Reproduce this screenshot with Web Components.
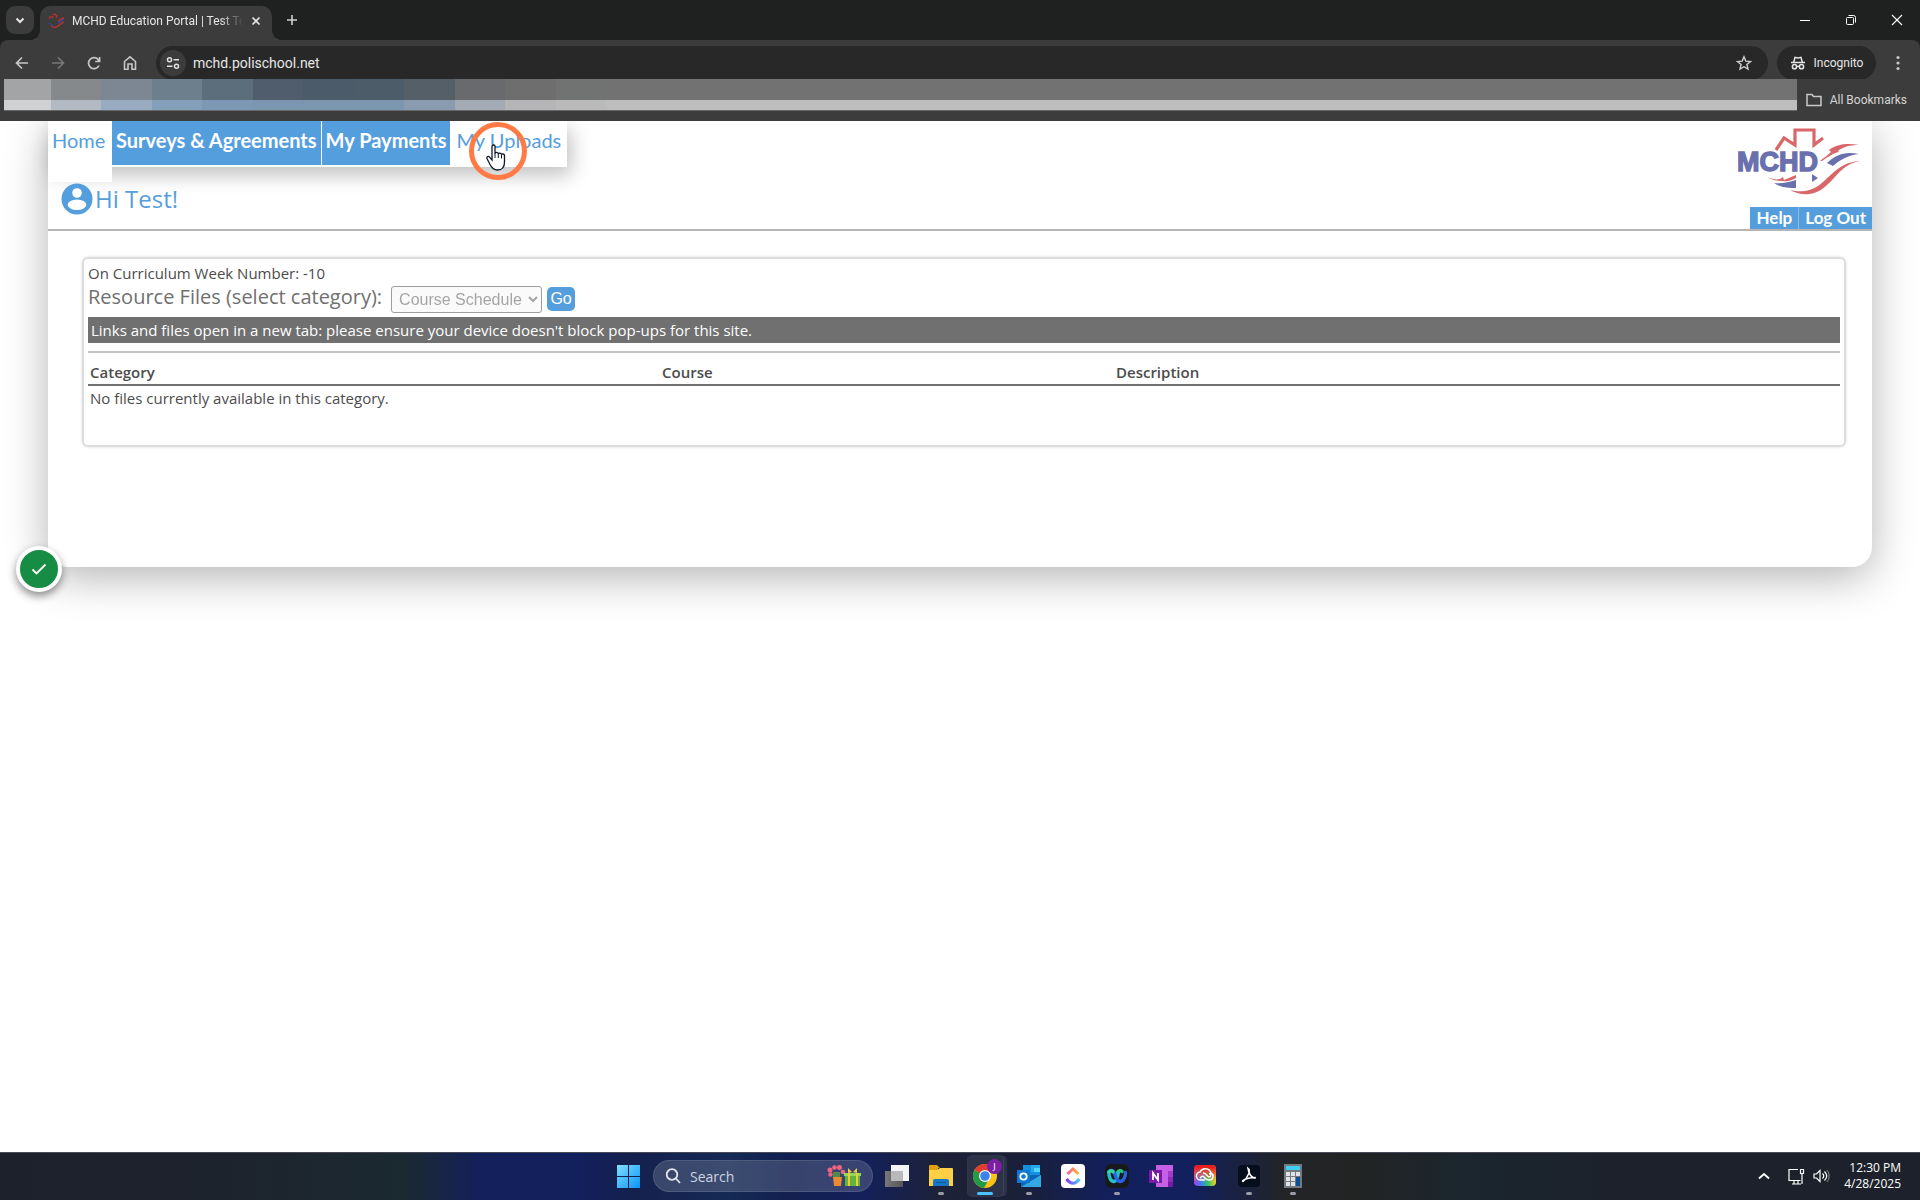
<!DOCTYPE html>
<html lang="en">
<head>
<meta charset="utf-8">
<title>MCHD Education Portal | Test Test</title>
<style>
html,body{margin:0;height:100%}
body{background:#fff;font-family:"Open Sans","Noto Sans",sans-serif;overflow:hidden}
</style>
</head>
<body>
<desktop-screen>
  <browser-frame slot="browser">
    <tab-strip slot="tabs">MCHD Education Portal | Test Test</tab-strip>
    <tool-bar slot="toolbar" address="mchd.polischool.net"></tool-bar>
    <bookmark-bar slot="bookmarks">All Bookmarks</bookmark-bar>
    <portal-page>
      <portal-header slot="header" user="Test"></portal-header>
      <resource-panel>
        <span slot="week">On Curriculum Week Number: -10</span>
        <span slot="notice">Links and files open in a new tab: please ensure your device doesn't block pop-ups for this site.</span>
      </resource-panel>
    </portal-page>
  </browser-frame>
  <task-bar slot="taskbar"></task-bar>
</desktop-screen>
<script>
const RESET = `:host,*{box-sizing:border-box}button{font:inherit;color:inherit;background:none;border:0;padding:0;margin:0;display:grid;place-items:center}svg{display:block}`;
function define(name, html, setup) {
  const t = document.createElement('template');
  t.innerHTML = '<style>' + RESET + '</style>' + html;
  customElements.define(name, class extends HTMLElement {
    connectedCallback() {
      if (this.shadowRoot) return;
      this.attachShadow({mode: 'open'}).append(t.content.cloneNode(true));
      if (setup) setup(this, this.shadowRoot);
    }
  });
}

define('desktop-screen', `
<style>
:host{display:flex;flex-direction:column;height:100vh}
main{flex:1;min-height:0;display:flex;flex-direction:column}
::slotted(browser-frame){flex:1}
</style>
<main><slot name="browser"></slot></main>
<slot name="taskbar"></slot>`);

define('browser-frame', `
<style>
:host{display:flex;flex-direction:column;min-height:0;background:#fff}
section{flex:1;min-height:0;overflow:hidden}
</style>
<slot name="tabs"></slot><slot name="toolbar"></slot><slot name="bookmarks"></slot>
<section><slot></slot></section>`);

define('tab-strip', `
<style>
:host{display:flex;align-items:stretch;height:40px;background:#1f2120;color:#e6e6e6;font-size:12px;padding-left:6px}
.menu{width:28px;height:28px;border-radius:9px;background:#3c3c3c;margin-top:6px}
.tab{position:relative;display:flex;align-items:center;width:232px;height:34px;margin:6px 0 0 6px;padding:0 8px 5px;background:#3c3c3c;border-radius:10px 10px 0 0}
.tab::before,.tab::after{content:"";position:absolute;bottom:0;width:10px;height:10px}
.tab::before{left:-10px;background:radial-gradient(circle at 0 0,transparent 10px,#3c3c3c 10px)}
.tab::after{right:-10px;background:radial-gradient(circle at 100% 0,transparent 10px,#3c3c3c 10px)}
.title{width:171px;margin:0 8px;overflow:hidden;white-space:nowrap;font:12px Roboto,sans-serif;-webkit-mask:linear-gradient(90deg,#000 148px,transparent)}
.add{width:40px}
.win{margin-left:auto;display:flex}
.win button{width:46px}
</style>
<button class="menu" aria-label="Search tabs"><svg width="12" height="12" fill="none" stroke="#e6e6e6" stroke-width="2"><path d="M2.500 4.500 6 8l3.500-3.500"/></svg></button>
<div class="tab">
<svg width="16" height="16" viewBox="0 0 16 16" fill="none" stroke-width="1.300"><path d="M1 5.500 3 3l1.500 1.500L5.500 1.500h3V4l1.500-1.500" stroke="#c0312f" stroke-dasharray="3 1"/><path d="M10 8c2-.5 3-3 6-3M3 13c6 4 8-2 13-4" stroke="#c0312f"/><path d="M10 10c3-1 3-3 6-3.500M1 10l4 3" stroke="#4b3f96"/></svg>
<span class="title"><slot></slot></span>
<button aria-label="Close tab"><svg width="10" height="10" stroke="#e6e6e6" stroke-width="1.700"><path d="m1.500 1.500 7 7m0-7-7 7"/></svg></button>
</div>
<button class="add" aria-label="New tab"><svg width="12" height="12" stroke="#d0d0d0" stroke-width="1.600"><path d="M6 1v10M1 6h10"/></svg></button>
<div class="win">
<button aria-label="Minimize"><svg width="12" height="12" stroke="#fff"><path d="M1 6.500h10"/></svg></button>
<button aria-label="Restore"><svg width="12" height="12" fill="none" stroke="#fff"><rect x="1.500" y="3.500" width="7" height="7" rx="1"/><path d="M3.500 1.500h5a2 2 0 0 1 2 2v5"/></svg></button>
<button aria-label="Close"><svg width="12" height="12" stroke="#fff" stroke-width="1.100"><path d="m1 1 10 10m0-10L1 11"/></svg></button>
</div>`);

define('tool-bar', `
<style>
:host{display:block;height:39px;background:#1f2120;color:#e6e6e6}
.row{display:flex;align-items:flex-start;height:39px;background:#3c3c3c;border-radius:8px 8px 0 0;padding:6px 8px 0 4px}
.row>button{height:34px}
.nav{width:36px}
.omni{flex:1;display:flex;align-items:center;height:34px;margin-left:8px;border-radius:17px;background:#282828;padding:0 16px 0 4px}
.info{width:26px;height:26px;border-radius:13px;background:#3c3c3c}
input{flex:1;min-width:0;border:0;background:none;color:#e6e6e6;padding:0;margin-left:7px;font:14px Roboto,"Open Sans",sans-serif}
.row>.inc{width:99px;border-radius:17px;background:#282828;margin-left:9px;display:flex;justify-content:center;align-items:center;gap:8px;font:12px Roboto,"Open Sans",sans-serif}
.more{width:44px;margin-right:-8px}
</style>
<div class="row">
<button class="nav" aria-label="Back"><svg width="14" height="14" fill="none" stroke="#c7c7c7" stroke-width="1.700"><path d="M13 7H2m5-5.500L1.500 7 7 12.500"/></svg></button>
<button class="nav" aria-label="Forward"><svg width="14" height="14" fill="none" stroke="#777" stroke-width="1.700"><path d="M1 7h11M7 1.500 12.500 7 7 12.500"/></svg></button>
<button class="nav" aria-label="Reload"><svg width="14" height="14" fill="none" stroke="#c7c7c7" stroke-width="1.700"><path d="M12 9.500A5.500 5.500 0 1 1 11.500 4L12.500 5.200M12.600 1v4.500H8.200"/></svg></button>
<button class="nav" aria-label="Home"><svg width="14" height="16" fill="none" stroke="#c7c7c7" stroke-width="1.600"><path d="M1.500 6.500 7 1.800l5.500 4.700V14.200H9V9H5v5.200H1.500z"/></svg></button>
<div class="omni">
<button class="info" aria-label="Site information"><svg width="14" height="14" fill="none" stroke="#e0e0e0" stroke-width="1.500"><circle cx="3.500" cy="3.800" r="2"/><path d="M7.500 3.800H13M1 10.200h5.500"/><circle cx="10.500" cy="10.200" r="2"/></svg></button>
<input aria-label="Address">
<button aria-label="Bookmark"><svg width="16" height="16" fill="none" stroke="#d0d0d0" stroke-width="1.400"><path d="m8 1.800 1.800 4.300 4.700.4-3.600 3 1.100 4.600L8 11.700l-4 2.400 1.100-4.600-3.600-3 4.700-.4z"/></svg></button>
</div>
<button class="inc"><svg width="16" height="16" fill="none" stroke="#e6e6e6" stroke-width="1.500"><path d="M1 7.500h14M3.800 7 5 2.300 8 3l3-.7L12.200 7"/><circle cx="4.500" cy="11.700" r="2.100"/><circle cx="11.500" cy="11.700" r="2.100"/><path d="M6.600 11.400h2.800"/></svg>Incognito</button>
<button class="more" aria-label="Menu"><svg width="4" height="16" fill="#c7c7c7"><circle cx="2" cy="2.500" r="1.600"/><circle cx="2" cy="8" r="1.600"/><circle cx="2" cy="13.500" r="1.600"/></svg></button>
</div>`, (el, r) => { r.querySelector('input').value = el.getAttribute('address'); });

define('bookmark-bar', `
<style>
:host{display:flex;height:42px;background:#3c3c3c;color:#d5d5d5;padding-left:4px;font:12px Roboto,"Open Sans",sans-serif}
.mosaic{flex:1;display:flex;height:32px;border-bottom:1px solid #686868;background:linear-gradient(#727272 21px,#bdbdbd 21px)}
.mosaic i{width:51px;background:linear-gradient(var(--a) 21px,var(--b) 21px)}
.mosaic i:nth-child(even){width:50px}
.mosaic i:first-child{width:47px}
button{display:flex;align-items:center;gap:8px;height:42px;padding:0 13px 0 9px}
</style>
<div class="mosaic"></div>
<button><svg width="16" height="14" fill="none" stroke="#c7c7c7" stroke-width="1.500"><path d="M1 12.500V1.500h5L7.500 3.500H15v9z"/></svg><slot></slot></button>`, (el, r) => {
  const cells = [['#a3a4a5','#d0d1d2'],['#86898b','#b3bac1'],['#7c8793','#98abc0'],['#6d7e8c','#839fba'],['#5c6d7b','#7c98b4'],['#4f5d6d','#7c96b1'],['#4b5b69','#7c96b0'],['#4c5c69','#7c96af'],['#555f67','#8b9baf'],['#686a6d','#a4aab3'],['#6e6e6f','#b5b5b7'],['#717372','#bababa']];
  const m = r.querySelector('.mosaic');
  for (const [a, b] of cells) {
    const i = document.createElement('i');
    i.style.cssText = '--a:' + a + ';--b:' + b;
    m.append(i);
  }
});

define('portal-page', `
<style>
:host{display:block;position:relative;padding:0 48px}
.card{background:#fff;border-radius:0 0 20px 20px;box-shadow:0 10px 44px rgba(0,0,0,.3);padding-bottom:120px}
.body{padding:26px 26px 0 34px}
.done{position:absolute;left:16px;bottom:-25px;width:46px;height:46px;border-radius:50%;background:#178c44;border:4px solid #fff;box-shadow:0 4px 8px rgba(0,0,0,.45)}
</style>
<div class="card"><slot name="header"></slot><div class="body"><slot></slot></div></div>
<button class="done" aria-label="Done"><svg width="16" height="12" fill="none" stroke="#fff" stroke-width="1.800"><path d="m1.500 6.500 4 4 9-9"/></svg></button>`);

define('portal-header', `
<style>
:host{display:flex;justify-content:space-between;height:110px;border-bottom:2px solid #b5b5b5}
a{color:#559edd;text-decoration:none}
nav{display:flex;align-items:flex-start;width:max-content;height:46px;background:#fff;box-shadow:4px 8px 20px rgba(0,0,0,.25);font:20px/26px Lato,sans-serif}
nav a{position:relative;height:44px;padding:6px 4px}
nav a.home{height:61px;width:64px;background:#fff}
nav a.fill{background:#559edd;color:#fff;font-weight:700}
nav a.fill+.fill{margin-left:1px}
nav a:last-child{padding:6px}
.hi{display:flex;align-items:center;gap:2px;color:#559edd;font-size:24px;line-height:32px;padding:16px 0 0 13px}
.ring{position:absolute;left:18px;top:0;pointer-events:none}
.side{display:flex;flex-direction:column;align-items:flex-end}
.logo{margin:6px 10px 0 0}
.links{display:flex;gap:1px;margin-top:auto;font:700 17px/22px Lato,sans-serif;background:#8dbbe0}
.links a{background:#559edd;color:#fff;padding:0 6px}
</style>
<div>
<nav>
<a class="home" href="#">Home</a><a class="fill" href="#">Surveys &amp; Agreements</a><a class="fill" href="#">My Payments</a><a href="#">My Uploads
<svg class="ring" width="60" height="60" viewBox="0 0 60 60"><circle cx="30" cy="30" r="26.500" fill="none" stroke="#ff7a45" stroke-width="5"/><path d="M24 25.500c0-2 3-2 3 0v7c.5-1.700 3-1.500 3.300.5.500-1.500 3-1.200 3.200.7.500-1.200 3-1 3 1V41c0 6-3 8-7 8-4.500 0-6-2.500-7.500-5.500l-3-6c-.7-2 1.500-2.800 2.800-1.200L24 39z" fill="#fff" stroke="#111827" stroke-width="1.300"/><path d="M27 32v5m3.300-4v4m3.200-3v3.500" stroke="#111827" fill="none"/></svg></a>
</nav>
<div class="hi"><svg width="32" height="32" viewBox="0 0 32 32"><circle cx="16" cy="16" r="15.500" fill="#559edd"/><circle cx="16" cy="10" r="4.800" fill="#fff"/><ellipse cx="16" cy="21.800" rx="9.300" ry="5.200" fill="#fff"/></svg><span>Hi <b></b></span></div>
</div>
<div class="side">
<svg class="logo" width="124" height="70" viewBox="0 0 124 70" role="img" aria-label="MCHD">
<path d="m38 23 8-12 11 7V3h19v15l9-7" fill="none" stroke="#d96668" stroke-width="3.200"/>
<text x="-1" y="44" font-family="Liberation Sans" font-weight="700" font-size="27" fill="#6a70ae" stroke="#6a70ae" stroke-width="1.400">MCHD</text>
<g fill="#d96668"><path d="M82 34c5-4 8-6 11-9l-2-2c8-6 18-7 30-5-10 0-16 2-21 6l1 1c-6 1-11 5-17 9zM52 63c13 3 23 1 33-8 11-10 19-20 37-21-12 2-18 8-26 17-9 10-16 15-25 16-7 1-13-1-19-4zM29 50c5 2 9 3 13 2l3-2 1 3 12-5v3c-4 2-8 4-13 3-6 0-12-1-16-4z"/></g>
<g fill="#6a70ae"><path d="M89 36c9-8 17-12 32-9-10 1-18 5-26 12zM36 56c8 1 15-1 22-3v8c-8 0-16-1-22-5zM74 47v8l6-4z"/></g></svg>
<div class="links"><a href="#">Help</a><a href="#">Log Out</a></div>
</div>`, (el, r) => {
  r.querySelector('.hi b').replaceWith(el.getAttribute('user') + '!');
});

define('resource-panel', `
<style>
:host{display:block;min-height:190px;border:2px solid #dcdcdc;border-radius:6px;padding:3px 4px;color:#4c4c4c;font-size:15px;line-height:24px;box-shadow:0 0 3px rgba(0,0,0,.15)}
.week{line-height:23px}
.pick{display:flex;align-items:center;height:28px}
label{font-size:20px;font-weight:500;color:#707070;margin-right:9px;line-height:24px;padding-bottom:4px}
select{width:151px;height:27px;font:16px "Liberation Sans",sans-serif;border:1px solid #767676;border-radius:3px;margin:0 5px 0 0;padding-left:3px;background:#f8f8f8}
.go{width:28px;height:24px;background:#559edd;color:#fff;border-radius:5px;font:16px "Liberation Sans",sans-serif}
.note{background:#707070;color:#fff;height:26px;line-height:26px;padding:0 3px;margin-top:4px}
hr{border:0;border-top:2px solid #c4c4c4;margin:8px 0 4px}
table{width:100%;border-collapse:collapse;table-layout:fixed}
th,td{text-align:left;padding:2px;line-height:24px}
th{font-weight:600;height:28px;border-bottom:2px solid #707070;padding:2px 2px 0}
td{padding:0 2px}
.c1{width:572px}.c2{width:454px}
</style>
<div class="week"><slot name="week"></slot></div>
<div class="pick"><label for="cat">Resource Files (select category):</label><select id="cat" disabled><option>Course Schedule</option></select><button class="go">Go</button></div>
<div class="note"><slot name="notice"></slot></div>
<hr>
<table><thead><tr><th class="c1">Category</th><th class="c2">Course</th><th>Description</th></tr></thead>
<tbody><tr><td colspan="3">No files currently available in this category.</td></tr></tbody></table>`);

const APPS = [
['Task view','',`<defs><linearGradient id="g"><stop stop-color="#777"/><stop offset="1" stop-color="#555"/></linearGradient></defs><path fill="#f4f4f6" d="M6 1h18v16H6z"/><path fill="url(#g)" d="M0 7h18v16H0z"/><path fill="#b9b9bb" d="M6 7h12v10H6z"/>`],
['File Explorer','run',`<path fill="#e0a10c" d="M0 2q0-1 1-1h7l3 3h-2v4H0z"/><path fill="#ffcf45" d="M0 6h8l3-2h12q1 0 1 1v17H0z"/><path fill="#1677c8" d="M4 22v-5q0-2 2-2h12q2 0 2 2v5z"/><path fill="#0c5a9c" d="M7 18h10v1H7z"/>`],
['Google Chrome','active',`<circle cx="12" cy="12" r="12" fill="#fbc116"/><path fill="#e33b2e" d="M12 12 1.600 6A12 12 0 0 1 22.400 6z"/><path fill="#229a48" d="M12 12 1.600 6A12 12 0 0 0 11 24l5-9z"/><circle cx="12" cy="12" r="6" fill="#fff"/><circle cx="12" cy="12" r="4.800" fill="#3c82ea"/>`],
['Outlook','run',`<path fill="#1490df" d="M6 1h17v14H6z"/><path fill="#28a8ea" d="M14 1h9v7h-9z"/><path fill="#50d9ff" d="M17 4h6v4h-6z"/><path fill="#0a67b5" d="M4 11h20v12H4z"/><path fill="#35a7e4" d="m4 23 20-12v12z"/><path fill="#0f78d4" d="M0 6h13v13H0z"/><circle cx="6.500" cy="12.500" r="3.200" fill="none" stroke="#fff" stroke-width="1.800"/>`],
['ClickUp','',`<defs><linearGradient id="g"><stop stop-color="#ff5a9d"/><stop offset="1" stop-color="#ffb629"/></linearGradient><linearGradient id="h"><stop stop-color="#8930fd"/><stop offset="1" stop-color="#49ccf9"/></linearGradient></defs><rect width="24" height="24" rx="4" fill="#fff"/><path d="m6.500 10 5.500-5 5.500 5" fill="none" stroke="url(#g)" stroke-width="3"/><path d="M5.500 15c4 5.500 9 5.500 13 0" fill="none" stroke="url(#h)" stroke-width="3"/>`],
['Webex','run',`<rect width="24" height="24" rx="6" fill="#17191b"/><g fill="none" stroke-width="3.400" stroke-linecap="round"><path d="M12.500 8.500c1-2 3-2.500 4.500-1" stroke="#2bc47d"/><path d="M3.800 8c0 5 2 9.500 5 9.500 3.500 0 3.500-5 4.500-8.500" stroke="#23c0c8"/><path d="M3.800 8c1.500-2.500 4.500-2 5.700 1.500 1.200 4 2.500 8 5.500 8 3.500 0 5.700-5 5.500-9" stroke="#2a63e8"/><path d="M3.800 8.200c1.200-1.700 3-1.700 4.200-.5" stroke="#35d6a0"/></g>`],
['OneNote','',`<path fill="#c65fe6" d="M7 1h17v22H7z"/><path fill="#a23bc9" d="M19 7h5v6h-5z"/><path fill="#8c2ab5" d="M19 13h5v5h-5z"/><path fill="#7719aa" d="M0 6h13v13H0zM19 18h5v5h-5z"/><path d="M4 16V9l5 7V9" fill="none" stroke="#fff" stroke-width="1.800"/>`],
['Creative Cloud','',`<defs><linearGradient id="g"><stop stop-color="#b03ae0"/><stop offset=".3" stop-color="#3f7bf5"/><stop offset=".65" stop-color="#35c46a"/><stop offset="1" stop-color="#f6d31c"/></linearGradient><linearGradient id="h" x2="0" y2="1"><stop offset=".1" stop-color="#ea1c1c"/><stop offset=".45" stop-color="#f5503a" stop-opacity=".7"/><stop offset=".8" stop-color="#f59a3a" stop-opacity="0"/></linearGradient></defs><rect x="1" y="1" width="22" height="21" rx="4" fill="url(#g)"/><rect x="1" y="1" width="22" height="21" rx="4" fill="url(#h)"/><g fill="none" stroke="#fff" stroke-width="1.500"><path d="M12 16H8a4 4 0 0 1-1-8 6 6 0 0 1 11 1 3.700 3.700 0 0 1-2 7c-3 0-4-2-5.500-3.500a2 2 0 0 0-3 2M10 9c3-1 4 4 6 4a1.700 1.700 0 0 0 0-3.500"/></g>`],
['Acrobat','run',`<rect x="1" y="1" width="22" height="22" rx="4" fill="#050f1c"/><path d="M11.500 5c2 1 0 8-5.500 12.500-2-.5 3-4 12-4 2 1-5 2-7-9z" fill="none" stroke="#fff" stroke-width="1.500"/>`],
['Calculator','run',`<path fill="#74797f" d="M3 0h18v24H3z"/><path fill="#3fd1f5" d="M5 2h14v4H5z"/><g fill="#dfe3e6"><path d="M5 8h4v4H5zM10 8h4v4h-4zM15 8h4v4h-4zM5 13h4v4H5zM10 13h4v4h-4zM5 18h4v4H5zM10 18h4v4h-4z"/></g><path fill="#0c4f94" d="M15 13h4v9h-4z"/>`]
];
define('task-app', `
<style>
:host{display:block;position:relative;width:44px;height:40px}
button{width:44px;height:40px;border-radius:4px}
:host([state=active]) button{width:35px;margin-left:5px;background:#ffffff14;box-shadow:0 0 0 1px #ffffff18,4px 0 0 0 #ffffff14}
:host([state=active]) svg{margin-left:-2px}
:host([state])::after{content:"";position:absolute;left:19px;bottom:1px;width:6px;height:3px;border-radius:2px;background:#9a9ca6}
:host([state=active])::after{left:14px;width:16px;background:#4cc2ff}
.badge{position:absolute;right:5px;top:3px;width:15px;height:15px;border-radius:50%;background:#7b1fa2;color:#fff;font:9px/15px "Open Sans",sans-serif;text-align:center}
</style>
<button><svg width="24" height="24" viewBox="0 0 24 24"></svg></button>`, (el, r) => {
  const app = APPS[el.dataset.app];
  r.querySelector('button').setAttribute('aria-label', app[0]);
  r.querySelector('svg').innerHTML = app[2];
  if (app[1]) el.setAttribute('state', app[1]);
  if (app[1] === 'active') {
    const b = document.createElement('span');
    b.className = 'badge';
    b.textContent = 'J';
    r.append(b);
  }
});

define('task-bar', `
<style>
:host{display:grid;grid-template-columns:1fr auto 1fr;align-items:center;height:48px;box-shadow:inset 0 1px #484b57;color:#fff;font:12px/16px "Open Sans",sans-serif;
background:linear-gradient(90deg,#1c212c 0,#1d232d 11%,#1b2930 21%,#14205a 25%,#12205d 30%,#15204d 33%,#152a55 38%,#122050 41%,#14205a 45%,#1d2238 49%,#1a2038 53%,#12205d 58%,#12205d 62%,#222426 67%,#222424 71%,#1b262e 76%,#1c212c 85%)}
.mid{grid-column:2;display:flex;align-items:center;padding-left:12px}
.start{width:24px;margin-right:12px}
.search{display:flex;align-items:center;width:220px;height:32px;border-radius:16px;background:#ffffff29;border:1px solid #ffffff1c;padding:0 11px;margin-right:2px}
input{flex:1;min-width:0;border:0;background:none;padding:0;margin-left:9px;color:#fff;font:14px "Open Sans",sans-serif}
input::placeholder{color:#cfd3e2}
.apps{display:flex}
.tray{display:flex;justify-content:flex-end;align-items:center;padding-right:19px}
.tray>svg{margin-right:8px}
.tray>svg:first-child{margin-right:18px}
.clock{text-align:right;margin-left:6px}
</style>
<div class="mid">
<button class="start" aria-label="Start"><svg width="24" height="24"><defs><linearGradient id="w" x2="1" y2="1"><stop stop-color="#7fe0ff"/><stop offset="1" stop-color="#0a93f5"/></linearGradient></defs><path fill="url(#w)" d="M0 1h11v11H0zM12 1h11v11H12zM0 13h11v11H0zM12 13h11v11H12z"/></svg></button>
<div class="search"><svg width="16" height="16" fill="none" stroke="#e4e6ef" stroke-width="1.800"><circle cx="7" cy="6.500" r="5.300"/><path d="m11 10.500 4 4.500"/></svg><input aria-label="Search" placeholder="Search"><svg width="34" height="22"><path fill="#508b4c" d="M6 7h7v6H6z"/><g fill="#f0647f"><circle cx="3" cy="5" r="2.500"/><circle cx="7.500" cy="2.500" r="2.300"/><circle cx="12.500" cy="2.500" r="2.500"/><circle cx="16" cy="7" r="2.300"/><circle cx="3.500" cy="9.500" r="2.200"/></g><path fill="#e88b34" d="M6 12h9l-1 9H7z"/><path fill="#5fb53b" d="M18 10h15v11H18z"/><path fill="#8edb51" d="M17 8h17v3H17z"/><path fill="#f5ca3a" d="M21 8h2v13h-2zM29 8h2v13h-2zM21 3l4 4-4 1zM30 3l-4 4 4 1z"/></svg></div>
<div class="apps"></div>
</div>
<div class="tray">
<svg width="12" height="8" fill="none" stroke="#fff" stroke-width="1.800"><path d="M1 6.500 6 2l5 4.500"/></svg>
<svg width="17" height="17" fill="none" stroke="#fff" stroke-width="1.200"><path d="M10 1.500H1v11h11.500M4 16h9M6 13v3m4-3v3M12.500 1.500h3v4h-3zM14 6v10"/></svg>
<svg width="17" height="14" fill="none" stroke="#fff" stroke-width="1.200"><path d="M1 5h2.500L7 1.500v11L3.500 9H1zM9.500 4.500c1.500 1.500 1.500 3.500 0 5M11.500 2.500c3 3 3 6 0 9"/><path stroke="#777" d="M14 1c3 4 3 8 0 12"/></svg>
<div class="clock"><div>12:30 PM</div><div>4/28/2025</div></div>
</div>`, (el, r) => {
  const box = r.querySelector('.apps');
  APPS.forEach((a, i) => {
    const t = document.createElement('task-app');
    t.dataset.app = i;
    box.append(t);
  });
});
</script>
</body>
</html>
